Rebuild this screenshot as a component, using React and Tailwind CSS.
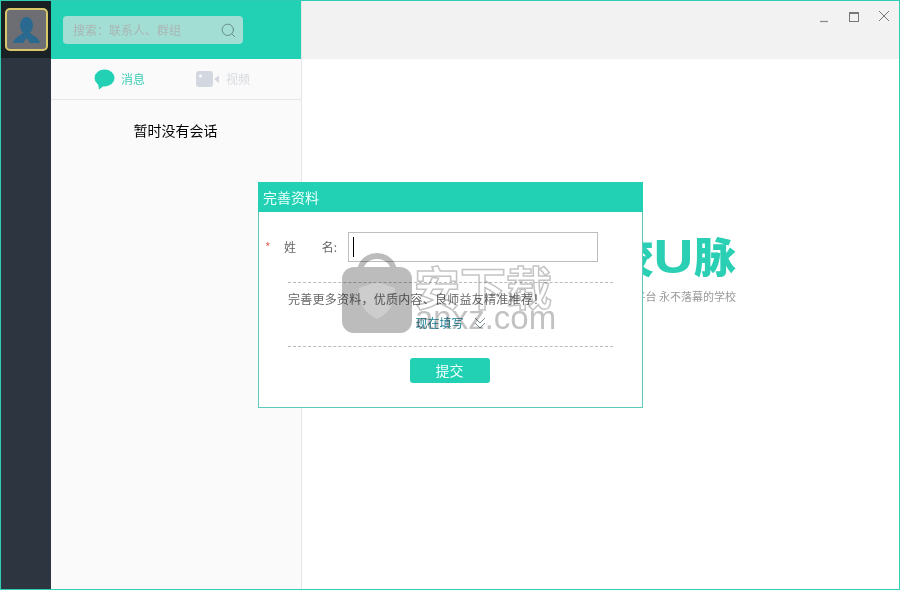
import React from 'react';
import {Search} from 'lucide-react';

const font = '[font-family:"Noto_Sans_CJK_SC","Liberation_Sans",sans-serif]';

const Avatar = () => (
    <div className="w-[43px] h-[43px] rounded-[5px] border-2 border-[#d9c76a] bg-[#6d6e74] flex items-end justify-center overflow-hidden pb-[6px]">
        <svg width="27" height="26" viewBox="0 0 27 26">
            <ellipse cx="13.5" cy="8.5" rx="6.5" ry="8.5" fill="#2a6a90"/>
            <path d="M10 16 L6 19 C3 20 1 23 0 26 L10 26 L13.5 21 L17 26 L27 26 C26 23 24 20 21 19 L17 16 Z" fill="#2a6a90"/>
        </svg>
    </div>
);

const SearchBox = () => (
    <div className="w-[180px] h-[28px] rounded-[4px] bg-[#a3ded5] flex items-center justify-between pl-[10px] pr-[6px]">
        <span className="text-[12px] text-[#aab5b3]">搜索：联系人、群组</span>
        <Search size={17} strokeWidth={1.2} className="text-[#5d7f7c]"/>
    </div>
);

const Tabs = () => (
    <div className="h-[41px] border-b border-[#e6e6e6] flex items-center">
        <div className="flex items-center ml-[43px] gap-[6px]">
            <svg width="21" height="21" viewBox="0 0 21 21">
                <ellipse cx="10.5" cy="9" rx="10" ry="8.5" fill="#22d0b4"/>
                <path d="M4 14 L5 20.5 L11 16 Z" fill="#22d0b4"/>
            </svg>
            <span className="text-[12px] text-[#3ccdb6]">消息</span>
        </div>
        <div className="flex items-center ml-[51px] gap-[7px]">
            <svg width="23" height="17" viewBox="0 0 23 17">
                <rect x="0" y="0" width="17" height="16" rx="3" fill="#d3d8e0"/>
                <circle cx="4.5" cy="5" r="1.6" fill="#fafafa"/>
                <path d="M18 8 L23 4.5 L23 12 Z" fill="#d3d8e0"/>
            </svg>
            <span className="text-[12px] text-[#d7dade]">视频</span>
        </div>
    </div>
);

const Watermark = () => (
    <div className="absolute left-[341px] top-[252px] pointer-events-none flex mix-blend-multiply">
        <svg width="70" height="80" viewBox="0 0 70 80">
            <path d="M18 18 C20 -2 50 -2 52 18" fill="none" stroke="#bcbcbc" strokeWidth="6"/>
            <rect x="0" y="14" width="70" height="66" rx="12" fill="#bcbcbc"/>
            <path d="M35 29 L53 35 C53 50 48 60 35 66 C22 60 17 50 17 35 Z" fill="#cdcdcd"/>
        </svg>
        <div className="relative w-[150px]">
            <span className="absolute left-[2px] top-[6px] text-[46px] leading-[52px] font-bold whitespace-nowrap text-white [-webkit-text-stroke:1.5px_#c4c4c4]">安下载</span>
            <span className="absolute left-[3px] top-[47px] text-[33px] leading-[36px] whitespace-nowrap text-[#c2c2c2] font-['Liberation_Sans']">anxz.com</span>
        </div>
    </div>
);

const Dialog = () => (
    <div className="absolute left-[257px] top-[181px] w-[385px] h-[226px] bg-white border border-[#5cc9bb]">
        <div className="h-[30px] bg-[#22d0b4] -mx-px -mt-px px-[5px] flex items-center text-[14px] text-[#eafffb]">完善资料</div>
        <div className="flex items-center mt-[20px] h-[30px]">
            <span className="ml-[6px] text-[12px] text-[#e86a5c] w-[19px]">*</span>
            <span className="text-[12px] text-[#666] w-[64px] flex justify-between pr-[11px]"><span>姓</span><span>名:</span></span>
            <div className="w-[250px] h-[30px] border border-[#bdbdbd] flex items-center pl-[4px]">
                <div className="w-px h-[20px] bg-black"/>
            </div>
        </div>
        <div className="mx-[29px] w-[325px] mt-[20px] border-t border-dashed border-[#bbb] pt-[9px] text-[12px] leading-[14px] tracking-[0.25px] text-[#666] whitespace-nowrap">
            完善更多资料，优质内容、良师益友精准推荐！
        </div>
        <div className="mt-[9px] h-[16px] flex items-center justify-center gap-[10px] text-[12px] leading-[16px] text-[#1d7f97]">
            <span>现在填写</span>
            <svg width="12" height="12" viewBox="0 0 12 12" fill="none" stroke="#7d8d90" strokeWidth="1">
                <path d="M1 1 L6 6 L11 1 M1 6 L6 11 L11 6"/>
            </svg>
        </div>
        <div className="mx-[29px] w-[325px] mt-[15px] border-t border-dashed border-[#bbb]"/>
        <div className="flex justify-center mt-[11px] pr-[2px]">
            <div className="w-[80px] h-[25px] rounded-[3px] bg-[#22d0b4] text-[#eafffb] text-[14px] flex items-center justify-center">提交</div>
        </div>
    </div>
);

const App = () => {
    return (
        <div className={`relative w-[900px] h-[590px] border border-[#2fcdb4] flex overflow-hidden ${font}`}>
            <div className="w-[50px] bg-[#2c3540] flex flex-col">
                <div className="h-[57px] bg-[#1a2125] flex items-start justify-center pt-[7px]">
                    <Avatar/>
                </div>
            </div>
            <div className="w-[251px] bg-[#fafafa] border-r border-[#e6e6e6] flex flex-col">
                <div className="h-[58px] bg-[#22d0b4] flex items-center pl-[12px]">
                    <SearchBox/>
                </div>
                <Tabs/>
                <div className="text-center text-[14px] leading-[20px] text-black mt-[20px] pr-[1px]">暂时没有会话</div>
            </div>
            <div className="flex-1 bg-white flex flex-col">
                <div className="h-[58px] bg-[#f2f2f2] flex items-start justify-end">
                    <svg width="80" height="20" viewBox="0 0 80 20" className="mt-[7px] mr-[9px]">
                        <path d="M10 13.5 H18" stroke="#888" strokeWidth="1.2"/>
                        <rect x="39.5" y="4.5" width="9" height="9" fill="none" stroke="#777" strokeWidth="1"/>
                        <path d="M39.5 5 H48.5" stroke="#777" strokeWidth="2"/>
                        <path d="M69 3 L79 13 M79 3 L69 13" stroke="#777" strokeWidth="1"/>
                    </svg>
                </div>
                <div className="flex-1 flex flex-col items-end pr-[163px] pt-[170px]">
                    <div className="h-[52px] flex items-baseline font-black text-[#2bcfb4] whitespace-nowrap leading-[52px]">
                        <span className="text-[42px]">优校</span>
                        <span className="text-[48px] inline-block scale-x-[1.15] mx-[3px] font-['Liberation_Sans']">U</span>
                        <span className="text-[42px]">脉</span>
                    </div>
                    <div className="text-[11px] leading-[16px] text-[#999] whitespace-nowrap mt-[7px]">永不落幕的学习平台 永不落幕的学校</div>
                </div>
            </div>
            <Dialog/>
            <Watermark/>
        </div>
    );
};

export default App;
